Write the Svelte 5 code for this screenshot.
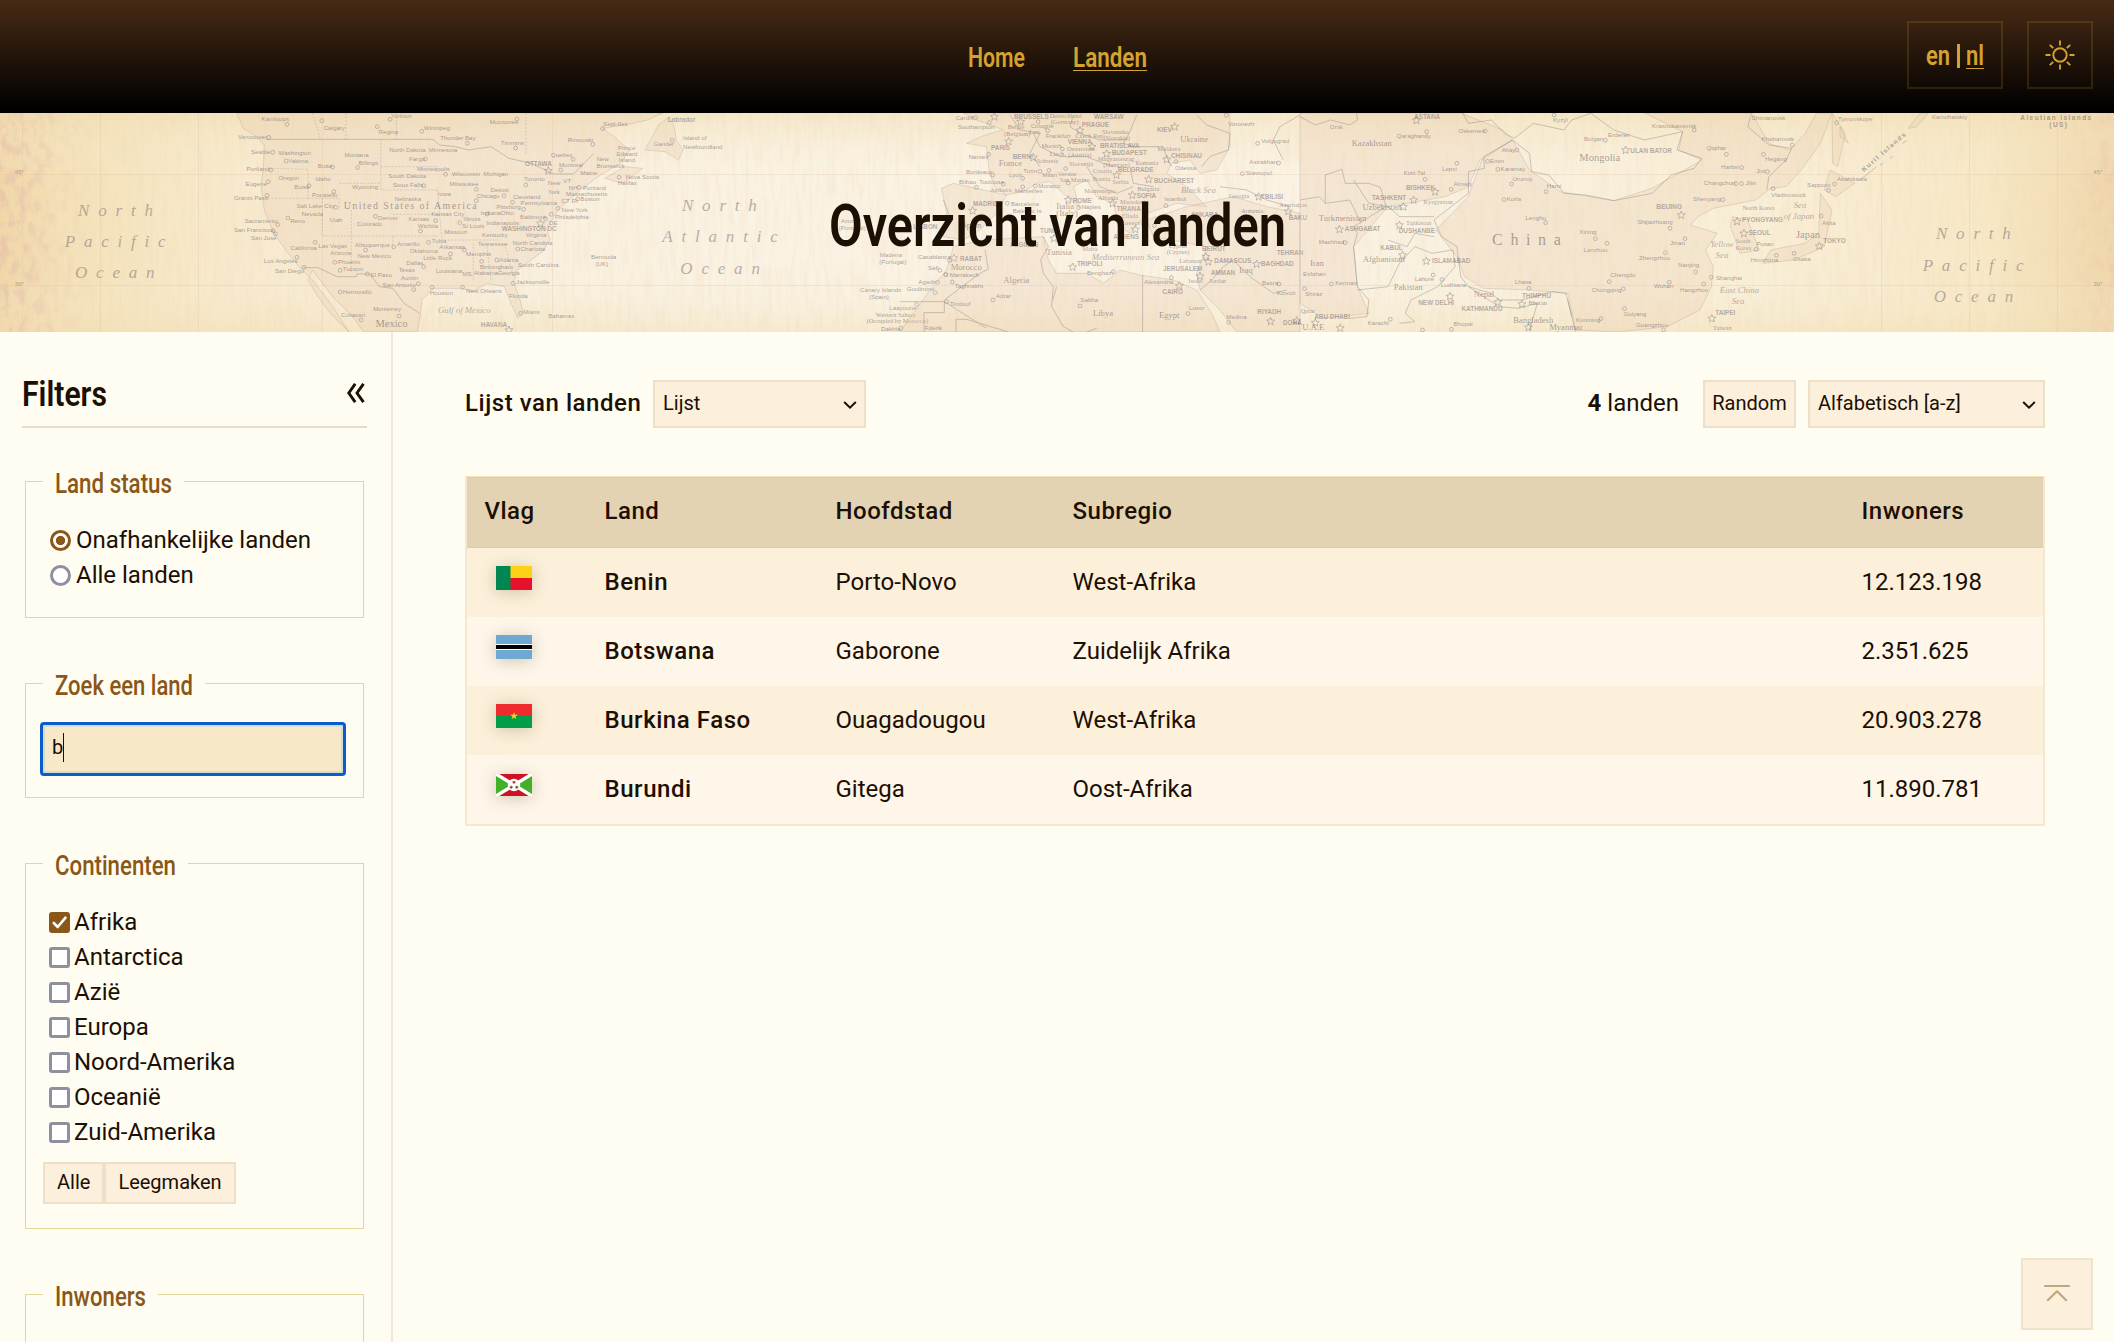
<script>
  const countries = [
    { code: 'bj', name: 'Benin', capital: 'Porto-Novo', region: 'West-Afrika', population: '12.123.198' },
    { code: 'bw', name: 'Botswana', capital: 'Gaborone', region: 'Zuidelijk Afrika', population: '2.351.625' },
    { code: 'bf', name: 'Burkina Faso', capital: 'Ouagadougou', region: 'West-Afrika', population: '20.903.278' },
    { code: 'bi', name: 'Burundi', capital: 'Gitega', region: 'Oost-Afrika', population: '11.890.781' }
  ];
  const continents = ['Afrika', 'Antarctica', 'Azië', 'Europa', 'Noord-Amerika', 'Oceanië', 'Zuid-Amerika'];

  // The banner map is made of sheets; every sheet has its own origin and grid scale.
  // Labels: [text, x, baseline, style]. Styles: n = town, b = capital, s = country, i = sea.
  const sheets = [
    {
      ox: 0, oy: 100, sx: 0.4464, sy: 0.3333,
      land: [
        'M530 39 L545 85 L575 110 L592 135 L590 200 L585 260 L592 330 L612 395 L640 450 L670 500 L700 540 L735 600 L760 650 L782 696 L740 640 L712 590 L690 540 L700 510 L745 590 L790 650 L815 696 L935 696 L942 640 L945 600 L970 565 L1035 565 L1060 575 L1090 550 L1130 560 L1145 610 L1160 655 L1172 640 L1165 600 L1150 545 L1160 510 L1215 455 L1232 420 L1225 385 L1250 330 L1275 300 L1300 270 L1345 225 L1390 190 L1410 150 L1375 110 L1350 85 L1400 75 L1450 60 L1485 39 Z',
        'M1500 50 L1475 75 L1445 150 L1490 155 L1520 180 L1530 150 L1515 120 L1510 80 Z',
        'M1355 235 L1400 200 L1440 205 L1395 250 Z'
      ],
      lines: [
        'M595 118 L970 118 L985 135 L1020 140 L1050 150 L1100 140 L1140 175 L1190 190 L1240 222 L1285 222 L1330 160',
        'M680 503 L712 503 L755 530 L798 530 L800 522 L828 522 L850 560 L880 565 L905 610 L940 640'
      ],
      states: [
        'M605 205 L690 208 L690 295 L600 295 M690 295 L760 295 M722 295 L722 408 L980 408 M787 330 L787 520 M853 118 L853 270 L980 270 M853 200 L980 200 M760 250 L853 250 M760 295 L760 330 M880 343 L980 343 M880 408 L880 440 M775 39 L775 118 M888 39 L888 118 M1178 39 L1178 165 M980 270 L990 420 L1120 420 M1060 430 L1060 540 M1090 430 L1100 540 M1130 430 L1150 530 M700 39 L718 118'
      ],
      dots: [[643,73],[721,62],[845,80],[874,58],[945,94],[1047,130],[1155,144],[1158,57],[1350,86],[1328,133],[1284,178],[602,112],[611,157],[641,183],[607,210],[601,245],[598,286],[692,257],[748,275],[745,201],[801,203],[953,177],[998,223],[949,257],[1067,268],[1067,302],[1129,287],[1178,255],[1148,307],[1173,328],[1256,210],[1297,262],[1294,297],[1250,325],[1235,343],[1222,356],[752,322],[645,354],[622,374],[612,392],[617,402],[841,349],[976,362],[1030,368],[942,393],[706,427],[882,441],[819,450],[665,472],[681,502],[750,487],[762,511],[823,522],[960,427],[1040,450],[1009,462],[949,500],[1079,484],[1113,480],[1160,447],[937,551],[927,569],[968,562],[1036,562],[1150,550],[762,576],[894,648],[809,660],[1166,640],[1387,232],[1506,121],[1091,342]],
      stars: [[1228,212],[1211,370],[1140,690]],
      labels: [
        ['Kamloops',586,62,'n'],['Calgary',725,91,'n'],['Regina',848,103,'n'],['Yorkton',876,55,'n'],['Winnipeg',950,89,'n'],['Moosonee',1097,73,'n'],['Thunder Bay',986,119,'n'],['Timmins',1122,134,'n'],['Sept-Iles',1351,77,'n'],['Labrador',1496,67,'b'],['Vancouver',533,118,'n'],['Seattle',562,162,'n'],['Washington',624,164,'n'],['Yakima',645,188,'n'],['Portland',552,213,'n'],['Eugene',550,259,'n'],['Grants Pass',524,299,'n'],['Oregon',624,241,'n'],['Idaho',706,244,'n'],['Boise',659,266,'n'],['Pocatello',699,290,'n'],['Butte',712,203,'n'],['Billings',803,194,'n'],['Montana',772,171,'n'],['North Dakota',872,156,'n'],['Minnesota',960,157,'n'],['Fargo',916,182,'n'],['Minneapolis',934,214,'n'],['South Dakota',870,234,'n'],['Wisconsin',1012,227,'n'],['Michigan',1083,228,'n'],['Sioux Falls',880,261,'n'],['Milwaukee',1007,257,'n'],['Toronto',1174,244,'n'],['Detroit',1099,275,'n'],['Wyoming',789,268,'n'],['Nebraska',884,302,'n'],['Iowa',981,287,'n'],['Chicago',1068,293,'n'],['Cleveland',1149,298,'n'],['Pennsylvania',1166,316,'n'],['Pittsburg',1112,327,'n'],['Salt Lake City',664,325,'n'],['Nevada',676,349,'n'],['Utah',738,367,'n'],['Reno',650,368,'n'],['Denver',847,360,'n'],['Colorado',800,377,'n'],['Kansas',915,364,'n'],['Kansas City',966,348,'n'],['Illinois',1038,362,'n'],['Indiana',1077,345,'n'],['Ohio',1122,345,'n'],['Indianapolis',1089,376,'n'],['St Louis',1035,385,'n'],['Wichita',936,383,'n'],['Missouri',995,402,'n'],['Kentucky',1080,410,'n'],['Baltimore',1165,356,'n'],['Virginia',1178,412,'n'],['WASHINGTON DC',1124,393,'b'],['OTTAWA',1176,197,'b'],['Quebec',1234,172,'n'],['Rimouski',1272,126,'n'],['Montreal',1252,201,'n'],['Maine',1300,224,'n'],['New',1336,183,'n'],['Brunswick',1336,205,'n'],['Prince',1384,151,'n'],['Edward',1381,168,'n'],['Island',1386,185,'n'],['Nova Scotia',1402,238,'n'],['Halifax',1384,256,'n'],['Gander',1464,139,'n'],['NH',1274,269,'n'],['VT',1262,249,'n'],['Portland',1306,269,'n'],['Massachusetts',1268,287,'n'],['Boston',1300,304,'n'],['CT RI',1258,308,'n'],['New',1227,256,'n'],['York',1227,281,'n'],['New York',1258,337,'n'],['Philadelphia',1243,356,'n'],['DE',1230,374,'n'],['Sacramento',548,368,'n'],['San Francisco',524,397,'n'],['San Jose',562,420,'n'],['California',651,449,'n'],['Las Vegas',713,445,'n'],['Arizona',740,466,'n'],['Albuquerque',795,440,'n'],['New Mexico',801,473,'n'],['Amarillo',890,437,'n'],['Oklahoma',918,459,'n'],['Tulsa',967,429,'n'],['Arkansas',984,448,'n'],['Little Rock',948,479,'n'],['Memphis',1044,467,'n'],['Tennessee',1070,439,'n'],['North Carolina',1148,435,'n'],['Charlotte',1166,454,'n'],['South Carolina',1160,501,'n'],['Atlanta',1118,485,'n'],['Birmingham',1075,506,'n'],['Alabama',1061,526,'n'],['Georgia',1115,526,'n'],['MS',1036,527,'n'],['Louisiana',976,518,'n'],['Dallas',910,495,'n'],['Texas',893,517,'n'],['Phoenix',757,492,'n'],['Tucson',768,514,'n'],['El Paso',830,531,'n'],['Los Angeles',591,489,'n'],['San Diego',616,520,'n'],['Austin',898,541,'n'],['San Antonio',857,561,'n'],['Houston',963,584,'n'],['New Orleans',1044,579,'n'],['Jacksonville',1156,552,'n'],['Florida',1140,594,'n'],['Miami',1172,642,'n'],['Bahamas',1228,655,'n'],['Hermosillo',768,581,'n'],['Monterrey',836,634,'n'],['Culiacan',764,650,'n'],['HAVANA',1077,682,'b'],['Bermuda',1324,477,'n'],['(UK)',1334,499,'n'],['Mexico',841,681,'m'],['Gulf of Mexico',981,640,'i'],['United States of America',770,328,'u'],['45°',33,222,'n'],['30°',33,558,'n'],
        ['North',175,347,'o'],['Pacific',145,441,'o'],['Ocean',168,534,'o']
      ]
    },
    {
      ox: 600, oy: 100, sx: 0.3333, sy: 0.3333, land: [], lines: [], states: [], dots: [[1049,482],[1038,524],[1013,547],[1020,511],[1006,578],[950,613],[903,684]], stars: [[1062,474]],
      labels: [
        ['Island of',249,120,'n'],['Newfoundland',249,146,'n'],['Azores',722,370,'n'],['(Portugal)',716,389,'n'],['Madeira',839,471,'n'],['(Portugal)',838,491,'n'],['Canary Islands',780,577,'n'],['(Spain)',807,596,'n'],['Casablanca',954,476,'n'],['Safi',984,509,'n'],['Agadir',955,552,'n'],['Goulimine',920,572,'n'],['Laayoune',868,629,'n'],['Western Sahara',827,650,'z'],['(Occupied by Morocco)',800,670,'z'],['Dakhla',843,693,'n'],
        ['North',246,333,'o'],['Atlantic',187,427,'o'],['Ocean',241,521,'o']
      ]
    },
    {
      ox: 900, oy: 0, sx: 0.3333, sy: 0.3333,
      land: [
        'M200 430 L260 440 L268 520 L285 560 L320 585 L380 570 L410 550 L450 545 L500 590 L540 625 L520 560 L560 540 L590 590 L640 610 L660 680 L690 700 L740 640 L830 610 L920 620 L860 560 L800 520 L815 490 L870 480 L900 520 L950 510 L990 440 L990 339 L190 339 L230 360 L310 390 L255 405 Z',
        'M125 565 L160 550 L320 585 L290 640 L240 690 L190 720 L130 710 L140 640 Z',
        'M160 740 L250 720 L430 710 L445 780 L470 820 L560 820 L610 850 L660 810 L720 825 L820 840 L890 870 L910 900 L940 950 L960 996 L0 996 L40 940 L90 870 L140 810 Z',
        'M740 660 L860 620 L1000 590 L1100 620 L1200 640 L1200 996 L1010 996 L960 930 L900 870 L890 820 L920 740 L760 710 Z'
      ],
      lines: [
        'M430 710 L445 740 L422 780 L430 820 L460 860 L455 920 L490 980 L520 996',
        'M728 825 L728 996 M133 900 L240 820 L265 808 L255 750 M0 905 L133 905 L133 938 L72 938 L72 996 M168 996 L168 958 L200 958 L325 996 M133 905 L260 985',
        'M470 860 L458 900 M900 870 L935 840 L970 800 L1000 780 L1050 830 L1120 880 L1160 870 M560 996 L590 985',
        'M710 345 L690 395 L670 430 L700 440 L790 440 L800 470 L815 500 M520 345 L510 380 L540 400 L600 420 L680 420 M400 400 L420 440 L480 470 L560 470 L610 490 L640 500 M890 345 L920 375 L990 400 L985 450 L930 470 L905 500 M1200 345 L1140 380 L1120 420 L1150 480 M130 600 L150 650 L130 700 M330 345 L360 390 L420 400 L390 460 L420 500 M560 500 L600 560 L650 580 L700 560 M690 500 L700 550 L760 560 M960 560 L1040 570 L1100 600 L1170 620'
      ],
      states: [],
      dots: [[227,353],[268,368],[266,463],[278,525],[229,562],[310,552],[368,535],[368,561],[322,610],[414,365],[443,392],[487,447],[420,514],[447,511],[497,506],[406,558],[505,549],[536,623],[979,346],[1073,430],[1136,489],[1027,521],[828,485],[798,617],[763,677],[640,815],[814,833],[864,941],[986,967],[540,918],[279,900],[157,846],[137,824],[140,905],[1137,852]],
      stars: [[283,350],[326,424],[400,472],[362,365],[540,391],[824,380],[576,440],[620,461],[800,478],[650,525],[746,538],[697,585],[505,599],[638,610],[706,688],[218,632],[518,801],[918,770],[900,828],[838,857],[1070,792],[1112,964],[1076,590],[1165,634],[462,715],[925,785],[1190,962]],
      labels: [
        ['Cardiff',167,360,'n'],['Southampton',173,386,'n'],['PARIS',273,449,'b'],['BRUSSELS',342,358,'b'],['Belgie',323,387,'z'],['(Belgium)',312,407,'z'],['Lux.',388,403,'z'],['Nantes',206,476,'n'],['BERN',338,476,'b'],['France',296,499,'s'],['Bordeaux',198,521,'n'],['Lyon',327,530,'n'],['Turin',370,520,'n'],['Bilbao',177,552,'n'],['Toulouse',238,551,'n'],['Andorra',270,577,'z'],['Marseilles',344,579,'n'],['Monaco',415,563,'n'],['MADRID',219,618,'b'],['Barcelona',333,618,'n'],['Balearic Is',338,640,'n'],['LISBON',40,687,'b'],['Spain',185,685,'s'],['Deutschland',449,355,'z'],['(Germany)',452,373,'z'],['Cologne',392,385,'n'],['WARSAW',582,357,'b'],['PRAGUE',545,382,'b'],['Frankfurt',437,413,'n'],['Czech Rep.',526,415,'z'],['Slovensko',606,403,'z'],['(Slovakia)',610,421,'z'],['VIENNA',503,433,'b'],['Munich',425,445,'n'],['Osterreich',501,452,'z'],['(Austria)',505,471,'z'],['BRATISLAVA',600,444,'b'],['BUDAPEST',635,464,'b'],['Magyarorszag',593,483,'z'],['(Hungary)',610,502,'z'],['Liech.',449,468,'z'],['Schweiz',410,488,'z'],['Slovenija',507,497,'z'],['Croatia',579,520,'z'],['Milan',427,531,'n'],['Venice',474,527,'n'],['San Marino',479,545,'z'],['Bosnia',578,544,'z'],['Serbia',637,553,'z'],['Montenegro',553,579,'z'],['Albania',594,600,'z'],['ROME',518,608,'b'],['Italia',469,626,'s'],['(Italy)',469,648,'s'],['Naples',545,628,'n'],['TIRANA',650,632,'b'],['Macedonia',660,613,'z'],['SOFIA',710,593,'b'],['Bulgaria',712,572,'z'],['BUCHAREST',762,549,'b'],['BELGRADE',653,517,'b'],['Romania',706,495,'z'],['Moldova',772,454,'z'],['CHISINAU',813,473,'b'],['Odessa',825,509,'n'],['KIEV',771,396,'b'],['Ukraine',841,425,'s'],['Voronezh',985,378,'n'],['Volgograd',1084,428,'n'],['Astrakhan',1048,493,'n'],['Stavropol',1037,526,'n'],['Black Sea',843,578,'i'],['Istanbul',793,604,'n'],['Georgia',986,595,'z'],['TBILISI',1083,596,'b'],['Armenia',1023,640,'z'],['Azerbaijan',1138,620,'z'],['BAKU',1166,660,'b'],['ANKARA',872,650,'b'],['Ellada',665,655,'z'],['(Greece)',660,674,'z'],['ATHENS',640,716,'b'],['TUNIS',420,699,'b'],['ALGIERS',330,742,'b'],['Malta',547,752,'z'],['Cyprus',806,743,'z'],['(Cyprus)',800,763,'z'],['BEIRUT',906,754,'b'],['Lebanon',838,788,'z'],['DAMASCUS',943,790,'b'],['BAGHDAD',1083,798,'b'],['TEHRAN',1130,766,'b'],['Iraq',1017,818,'s'],['JERUSALEM',789,814,'b'],['AMMAN',932,825,'b'],['Israel',865,850,'z'],['Jordan',927,850,'z'],['Mediterranean Sea',575,781,'i'],['Tunisia',439,764,'s'],['TRIPOLI',531,799,'b'],['Benghazi',561,826,'n'],['Alexandria',733,852,'n'],['CAIRO',787,883,'b'],['Basra',1086,854,'n'],['Kuwait',1130,884,'z'],['RABAT',180,783,'b'],['Morocco',152,809,'s'],['Marrakech',149,830,'n'],['Taghnakht',164,865,'n'],['Algeria',310,850,'s'],['Adrar',288,893,'n'],['Tindouf',150,917,'n'],['Sabha',541,907,'n'],['Libya',579,948,'s'],['Egypt',777,953,'s'],['Luxor',867,931,'n'],['Medina',979,957,'n'],['RIYADH',1072,943,'b'],['Fderik',75,990,'n'],['DOHA',1149,976,'b']
      ]
    },
    {
      ox: 1300, oy: 100, sx: 0.3827, sy: 0.3333,
      land: [
        'M355 390 L440 290 L475 180 L555 120 L600 210 L680 275 L820 302 L920 265 L1050 180 L990 150 L1000 95 L900 39 L1180 39 L1225 130 L1280 150 L1320 100 L1350 39 L1390 39 L1360 130 L1310 210 L1270 260 L1230 265 L1190 300 L1080 325 L1040 350 L1020 375 L1090 400 L1060 450 L1080 500 L1075 560 L1045 630 L960 680 L830 696 L720 690 L700 580 L600 570 L480 565 L430 530 L410 470 Z',
        'M0 39 L420 39 L530 90 L555 120 L470 180 L440 260 L380 290 L230 320 L140 440 L150 560 L180 640 L60 655 L0 610 Z',
        'M1130 350 L1170 360 L1200 450 L1150 460 L1125 380 Z',
        'M1360 280 L1390 330 L1370 440 L1290 480 L1210 490 L1230 450 L1320 430 L1355 400 Z',
        'M1385 210 L1450 250 L1400 290 L1370 270 Z',
        'M1390 39 L1425 100 L1405 200 L1392 190 Z'
      ],
      lines: [
        'M0 50 L40 75 L80 60 L130 75 L150 60 L148 39 M425 39 L440 70 L500 60 L535 100 L560 115 L610 70 L690 90 L710 60 L760 40 L820 90 L900 120 L960 105 L1000 95 L985 150 L1050 175 L1030 205 L970 225 L920 280 L820 302 L745 285 L690 280 L650 225 L605 215 L600 160 L555 120 L480 170 L482 205 L440 215 L440 280 L350 360 L370 410 L410 440 L420 530 L440 560 L500 580 L520 600 L580 600 L660 575 L695 580 L710 650',
        'M66 310 L66 225 L110 208 L118 250 L180 250 L210 262 L225 320 L140 380 L150 400 L140 440 L150 560 L180 600 L175 650 L130 655 M140 240 L180 310 L230 320 L260 350 L350 350 M0 300 L50 290 L66 310 L130 300 L160 370 M230 420 L280 440 L300 400 L350 410 M150 570 L230 560 L260 490 L300 440 L345 460 L400 450 L405 500 L360 560 L290 600 L275 640 L300 665 L260 670 M440 560 L520 620 L570 625 L620 610 L600 690 M700 600 L720 696 M1180 39 L1170 80 L1225 135 L1285 145 L1270 180 L1225 230 L1220 270'
      ],
      states: [],
      dots: [[331,95],[484,93],[567,150],[490,184],[517,208],[410,190],[327,238],[395,268],[553,252],[643,275],[533,299],[642,368],[772,416],[802,430],[798,121],[664,45],[1030,90],[1114,163],[1154,203],[1139,251],[1154,251],[1221,215],[1211,163],[1286,135],[1236,266],[1105,299],[967,385],[1006,416],[955,458],[1034,516],[1075,532],[1055,552],[965,547],[808,545],[845,567],[848,626],[786,656],[950,690],[598,565],[371,539],[348,525],[118,428],[82,552],[236,658],[396,688],[320,690],[12,566],[1362,348],[1397,252],[1381,271],[1291,460],[1245,466],[1192,448],[1402,68]],
      stars: [[304,61],[851,150],[353,275],[297,300],[270,320],[103,388],[260,375],[268,465],[330,483],[392,589],[517,606],[580,612],[996,345],[1142,364],[1160,400],[1357,438],[1076,655],[40,668],[105,684],[597,682]],
      labels: [
        ['Orsk',78,86,'n'],['ASTANA',298,56,'b'],['Qaraghandy',253,115,'n'],['Kazakhstan',135,137,'s'],['Oskemen',414,98,'n'],['Altay',527,155,'n'],['Emin',496,188,'n'],['Karamay',524,213,'n'],['Lepsi',371,213,'n'],['Kizil-Tal',271,224,'n'],['Urumqi',555,243,'n'],['Almaty',401,258,'n'],['Hami',645,264,'n'],['BISHKEK',277,269,'b'],['TASHKENT',188,300,'b'],['Korla',540,303,'n'],['Kyrgyzstan',323,312,'z'],['Uzbekistan',163,331,'s'],['Turkmenistan',49,363,'s'],['Tajikistan',277,374,'z'],['ASHGABAT',117,394,'b'],['DUSHANBE',258,400,'b'],['Lenghu',589,360,'n'],['Mashhad',49,432,'n'],['KABUL',210,449,'b'],['Afghanistan',164,486,'s'],['ISLAMABAD',345,489,'b'],['Iran',26,497,'s'],['Esfahan',8,527,'n'],['Kerman',92,556,'n'],['Shiraz',13,588,'n'],['Lahore',300,543,'n'],['Ludhiana',368,561,'n'],['Pakistan',245,571,'s'],['Nepal',454,590,'s'],['Lhasa',561,553,'n'],['NEW DELHI',309,615,'b'],['THIMPHU',580,595,'b'],['Bhutan',597,616,'z'],['KATHMANDU',422,634,'b'],['ABU DHABI',37,658,'b'],['Qatar',2,638,'z'],['U.A.E',6,690,'s'],['Karachi',177,675,'n'],['Bhopal',401,679,'n'],['Bangladesh',557,668,'s'],['Myanmar',651,690,'s'],['Kyzyl',661,66,'n'],['Bulgan',742,123,'n'],['Erdenet',805,110,'n'],['Krasnokamensk',920,84,'n'],['ULAN BATOR',863,160,'b'],['Mongolia',730,184,'m'],['Qiqihar',1062,151,'n'],['Harbin',1100,206,'n'],['Jixi',1192,219,'n'],['Hegang',1215,182,'n'],['Khabarovsk',1206,124,'n'],['Shimanovsk',1180,60,'n'],['Changchun',1055,254,'n'],['Jilin',1164,256,'n'],['Vladivostock',1231,292,'n'],['Shenyang',1027,302,'n'],['BEIJING',931,328,'b'],['North Korea',1156,329,'z'],['Shijiazhuang',881,371,'n'],['PYONGYANG',1155,366,'b'],['SEOUL',1172,406,'b'],['South',1138,428,'z'],['Korea',1138,451,'z'],['Pusan',1192,438,'n'],['Sea',1290,325,'i'],['of Japan',1264,356,'i'],['Japan',1296,415,'m'],['TOKYO',1367,430,'b'],['Akita',1364,374,'n'],['Sapporo',1325,262,'n'],['Asahikawa',1403,244,'n'],['Osaka',1288,483,'n'],['Hiroshima',1177,485,'n'],['Yellow',1072,442,'i'],['Sea',1086,474,'i'],['Xining',730,403,'n'],['Lanzhou',741,457,'n'],['Jinan',967,436,'n'],['Zhengzhou',886,480,'n'],['Nanjing',988,500,'n'],['Shanghai',1087,541,'n'],['Chengdu',811,532,'n'],['Chongqing',762,577,'n'],['Wuhan',925,565,'n'],['Hangzhou',993,577,'n'],['East China',1097,580,'i'],['Sea',1128,611,'i'],['Guiyang',845,649,'n'],['Kunming',721,667,'n'],['Guangzhou',878,680,'n'],['TAIPEI',1085,646,'b'],['Taiwan',1079,690,'z'],['China',502,434,'c']
      ]
    },
    {
      ox: 1840, oy: 0, sx: 0.3333, sy: 0.3333,
      land: ['M205 385 L240 339 L265 339 L230 380 Z', 'M0 380 L25 430 L0 410 Z'],
      lines: ['M60 540 L110 500 M120 495 L130 490 M150 475 L160 468 M188 430 L200 422'], states: [],
      dots: [], stars: [],
      labels: [['Tymovskoye',-6,363,'n'],['Kamchatskiy',276,358,'n'],['Aleutian Islands',541,361,'w'],['(US)',628,381,'w'],['45°',760,522,'n'],['30°',760,857,'n'],['North',288,718,'o'],['Pacific',248,812,'o'],['Ocean',281,906,'o']]
    }
  ];
</script>

<!-- Condensed heading face: the text is fitted to the given width. -->
{#snippet condensed(text, width, size, weight, height, baseline)}
  <svg class="cond" {width} {height}>
    <text x="0" y={baseline} font-size={size} font-weight={weight} textLength={width} lengthAdjust="spacingAndGlyphs">{text}</text>
  </svg>
{/snippet}

{#snippet chevron()}
  <svg class="chevron" width="14" height="8" viewBox="0 0 14 8"><path d="M1.2 1 L7 6.6 L12.8 1" /></svg>
{/snippet}

{#snippet flag(code)}
  {#if code === 'bj'}
    <svg class="flag" width="36" height="24" viewBox="0 0 36 24"><path fill="#fcd116" d="M0 0h36v12H0z" /><path fill="#e8112d" d="M0 12h36v12H0z" /><path fill="#008751" d="M0 0h14.5v24H0z" /></svg>
  {:else if code === 'bw'}
    <svg class="flag" width="36" height="24" viewBox="0 0 36 24"><path fill="#6da9d2" d="M0 0h36v24H0z" /><path fill="#fff" d="M0 9h36v6H0z" /><path fill="#000" d="M0 10h36v4H0z" /></svg>
  {:else if code === 'bf'}
    <svg class="flag" width="36" height="24" viewBox="0 0 36 24"><path fill="#ef2b2d" d="M0 0h36v12H0z" /><path fill="#009e49" d="M0 12h36v12H0z" /><path fill="#fcd116" d="M18 8l.95 2.7h2.85l-2.3 1.75.85 2.75L18 13.6l-2.35 1.6.85-2.75-2.3-1.75h2.85z" /></svg>
  {:else}
    <svg class="flag" width="36" height="22" viewBox="0 0 36 22"><path fill="#ce1126" d="M0 0h36v22H0z" /><path fill="#43b02a" d="M0 0l18 11L0 22zM36 0L18 11l18 11z" /><path stroke="#fff" stroke-width="3.4" d="M0 0l36 22M36 0L0 22" /><circle cx="18" cy="11" r="6.2" fill="#fff" /><path fill="#ce1126" stroke="#43b02a" stroke-width=".3" d="M18 6.6l.5.9h1l-.5.8.5.8h-1l-.5.9-.5-.9h-1l.5-.8-.5-.8h1zM15.200 11.600l.5.9h1l-.5.8.5.8h-1l-.5.9-.5-.9h-1l.5-.8-.5-.8h1zM20.800 11.600l.5.9h1l-.5.8.5.8h-1l-.5.9-.5-.9h-1l.5-.8-.5-.8h1z" /></svg>
  {/if}
{/snippet}

<div class="page">
  <header>
    <div class="side"></div>
    <nav>
      <a href="#home">{@render condensed('Home', 57, 27.4, 600, 34, 27)}</a>
      <a href="#landen" class="current">{@render condensed('Landen', 74, 27.4, 600, 34, 27)}</a>
    </nav>
    <div class="side tools">
      <div class="box lang">
        {@render condensed('en', 24, 27.4, 600, 34, 27)}
        <i class="bar"></i>
        <span class="current">{@render condensed('nl', 18, 27.4, 600, 34, 27)}</span>
      </div>
      <div class="box theme">
        <svg width="30" height="30" viewBox="0 0 30 30">
          <circle cx="15" cy="15" r="6.7" />
          <path d="M15 .5v5M15 24.5v5M.5 15h5M24.5 15h5M4.8 4.8l3.4 3.4M21.8 21.8l3.4 3.4M4.8 25.2l3.4-3.4M21.8 8.2l3.4-3.4" />
        </svg>
      </div>
    </div>
  </header>

  <div class="banner">
    <svg class="map" width="2114" height="219" viewBox="0 113 2114 219">
      <defs>
        <filter id="grain" x="0" y="0" width="100%" height="100%">
          <feTurbulence type="fractalNoise" baseFrequency=".22 .03" numOctaves="3" seed="8" />
          <feColorMatrix values="0 0 0 0 .85  0 0 0 0 .68  0 0 0 0 .45  0 0 0 1.2 -.5" />
        </filter>
        <filter id="stain" x="0" y="0" width="100%" height="100%">
          <feTurbulence type="fractalNoise" baseFrequency=".11 .07" numOctaves="4" seed="3" />
          <feColorMatrix values="0 0 0 0 .76  0 0 0 0 .48  0 0 0 0 .42  0 0 0 4 -1.8" />
        </filter>
        <linearGradient id="paper">
          <stop offset="0" stop-color="#f0d7a8" /><stop offset=".03" stop-color="#f4e1b8" /><stop offset=".1" stop-color="#f7e9cb" />
          <stop offset=".2" stop-color="#f8eedb" /><stop offset=".35" stop-color="#faf2e3" /><stop offset=".6" stop-color="#faf2e4" /><stop offset=".82" stop-color="#f9efd9" />
          <stop offset=".94" stop-color="#f7e8c6" /><stop offset="1" stop-color="#f0d7ab" />
        </linearGradient>
        <linearGradient id="fade" x2="0" y2="1">
          <stop offset="0" stop-color="#f0dcae" stop-opacity=".5" /><stop offset=".3" stop-color="#f8efdc" stop-opacity="0" />
          <stop offset=".75" stop-color="#f8efdc" stop-opacity="0" /><stop offset="1" stop-color="#f0dcae" stop-opacity=".4" />
        </linearGradient>
        <linearGradient id="edge">
          <stop offset="0" stop-color="#fff" /><stop offset=".045" stop-color="#000" /><stop offset=".975" stop-color="#000" /><stop offset="1" stop-color="#777" />
        </linearGradient>
        <mask id="edges"><rect y="113" width="2114" height="219" fill="url(#edge)" /></mask>
      </defs>
      <rect y="113" width="2114" height="219" fill="url(#paper)" />
      <rect y="113" width="2114" height="219" fill="url(#fade)" />
      <path class="grid" d="M0 174.500H2114M0 285.500H2114M22.500 113V332M100.500 113V332M198.500 113V332M322.500 113V332M552.500 113V332M1881.500 113V332M1969.500 113V332M2057.500 113V332" />
      {#each sheets as s}
        <g transform="translate({s.ox} {s.oy}) scale({s.sx} {s.sy})">
          {#each s.land as d}<path class="land" {d} />{/each}
          {#each s.lines as d}<path class="border" {d} />{/each}
          {#each s.states as d}<path class="border state" {d} />{/each}
        </g>
        {#each s.dots as [x, y]}<circle class="town" cx={s.ox + x * s.sx} cy={s.oy + y * s.sy} r="1.9" />{/each}
        {#each s.stars as [x, y]}<path class="town" transform="translate({s.ox + x * s.sx} {s.oy + y * s.sy})" d="M0-4l1.100 2.700 2.900.2-2.200 1.800.7 2.900L0 2l-2.500 1.600.7-2.900-2.200-1.800 2.900-.2z" />{/each}
        {#each s.labels as [t, x, y, k]}<text class="label {k}" x={s.ox + x * s.sx} y={s.oy + y * s.sy}>{t}</text>{/each}
      {/each}
      <text class="label w" transform="translate(1864 172) rotate(-41)">Kuril Islands</text>
      <rect y="113" width="2114" height="219" filter="url(#grain)" opacity=".5" />
      <rect y="113" width="2114" height="219" filter="url(#stain)" mask="url(#edges)" opacity=".5" />
    </svg>
    <h1>{@render condensed('Overzicht van landen', 457, 58.5, 650, 70, 59)}</h1>
  </div>

  <div class="body">
    <aside>
      <div class="filters">
        <h2>{@render condensed('Filters', 85, 35.5, 650, 44, 34)}</h2>
        <svg class="collapse" width="20" height="20" viewBox="0 0 20 20"><path d="M9.200.8L2.800 10l6.400 9.200M17.500.8L11 10l6.500 9.200" /></svg>
      </div>

      <fieldset class="status">
        <legend>{@render condensed('Land status', 117, 27.4, 550, 33, 28)}</legend>
        <div class="opt"><span class="radio on"></span>Onafhankelijke landen</div>
        <div class="opt"><span class="radio"></span>Alle landen</div>
      </fieldset>

      <fieldset class="search">
        <legend>{@render condensed('Zoek een land', 138, 27.4, 550, 33, 28)}</legend>
        <div class="input">b<i class="caret"></i></div>
      </fieldset>

      <fieldset class="continents">
        <legend>{@render condensed('Continenten', 121, 27.4, 550, 33, 28)}</legend>
        {#each continents as c, i}
          <div class="opt tick">
            <span class="check" class:on={i === 0}>
              {#if i === 0}<svg width="21" height="21" viewBox="0 0 21 21"><path d="M4.800 11l3.900 4L16.500 5.700" /></svg>{/if}
            </span>{c}
          </div>
        {/each}
        <div class="actions"><span class="btn">Alle</span><span class="btn">Leegmaken</span></div>
      </fieldset>

      <fieldset class="inhabitants">
        <legend>{@render condensed('Inwoners', 91, 27.4, 550, 33, 28)}</legend>
      </fieldset>
    </aside>

    <main>
      <div class="toolbar">
        <strong>Lijst van landen</strong>
        <div class="control view">Lijst {@render chevron()}</div>
        <div class="count"><b>4</b> landen</div>
        <div class="control random">Random</div>
        <div class="control sort">Alfabetisch [a-z] {@render chevron()}</div>
      </div>

      <table>
        <colgroup><col class="c1" /><col class="c2" /><col class="c3" /><col class="c4" /><col /></colgroup>
        <thead>
          <tr><th>Vlag</th><th>Land</th><th>Hoofdstad</th><th>Subregio</th><th>Inwoners</th></tr>
        </thead>
        <tbody>
          {#each countries as c}
            <tr><td>{@render flag(c.code)}</td><td class="name">{c.name}</td><td>{c.capital}</td><td>{c.region}</td><td>{c.population}</td></tr>
          {/each}
        </tbody>
      </table>
    </main>
  </div>

  <div class="totop">
    <svg width="28" height="20" viewBox="0 0 28 20"><path d="M2 3h24M4.800 17.200L14 8.300l9.200 8.900" /></svg>
  </div>
</div>

<style>
  :global(body) { background: #fffdf1; overflow: hidden; }
  .page { position: relative; width: 2114px; height: 1342px; overflow: hidden; background: #fffdf1; color: #1c0f04; font: 24px/35px Roboto, 'Liberation Sans', sans-serif; box-sizing: border-box; }
  .page :is(div, aside, main, fieldset, span, header) { box-sizing: border-box; }
  .cond { display: block; overflow: visible; fill: currentColor; }

  header { display: flex; align-items: center; justify-content: space-between; height: 113px; padding: 0 21px 3px; background: linear-gradient(#482b14, #000 97%); color: #d4a32f; }
  .side { width: 300px; }
  nav { display: flex; gap: 48px; }
  a { color: inherit; text-decoration: none; }
  .current { display: block; height: 31px; border-bottom: 1px solid #d4a32f; box-sizing: border-box; }
  nav a { height: 31px; box-sizing: border-box; }
  .tools { display: flex; justify-content: flex-end; gap: 24px; }
  .box { display: flex; align-items: center; justify-content: center; height: 68px; border: 2px solid rgba(212, 163, 47, .17); }
  .lang { width: 96px; align-items: flex-start; padding-top: 15px; }
  .bar { width: 3px; height: 24px; margin: 6px 6px 0 7px; background: currentColor; }
  .theme { width: 66px; }
  .theme svg { fill: none; stroke: currentColor; stroke-width: 1.9; }

  .banner { display: grid; height: 219px; overflow: hidden; }
  .map, h1 { grid-area: 1 / 1; }
  h1 { margin: 0; place-self: start center; padding-top: 74px; z-index: 1; }
  .grid { fill: none; stroke: #d8b08a; stroke-opacity: .22; }
  .land { fill: #e6c4a6; fill-opacity: .24; stroke: #9c8d84; stroke-opacity: .3; stroke-width: .9; vector-effect: non-scaling-stroke; stroke-linejoin: round; }
  .border { fill: none; stroke: #8c8684; stroke-opacity: .5; stroke-width: .9; vector-effect: non-scaling-stroke; stroke-linejoin: round; }
  .state { stroke-opacity: .35; stroke-dasharray: 2 1.500; }
  .town { fill: none; stroke: #857c80; stroke-opacity: .6; stroke-width: .8; }
  .label { fill: #6a6168; fill-opacity: .6; font-size: 6.2px; font-family: 'Liberation Sans', sans-serif; }
  .label.b { font-weight: 700; font-size: 6.4px; fill-opacity: .5; }
  .label.s, .label.z, .label.m { font-family: 'Liberation Serif', serif; font-size: 8.600px; }
  .label.z { font-size: 6.400px; }
  .label.m { font-size: 10.500px; }
  .label.i { font-family: 'Liberation Serif', serif; font-style: italic; font-size: 8.800px; fill-opacity: .5; }
  .label.u { font-family: 'Liberation Serif', serif; font-size: 10px; letter-spacing: 1.400px; }
  .label.o { font-family: 'Liberation Serif', serif; font-style: italic; font-size: 17px; letter-spacing: 8.800px; fill-opacity: .5; }
  .label.c { font-family: 'Liberation Serif', serif; font-size: 16px; letter-spacing: 7.600px; }
  .label.w { font-weight: 700; font-size: 6.500px; letter-spacing: 1.400px; }

  .body { display: flex; height: 1010px; }
  aside { width: 393px; flex: none; border-right: 2px solid #efe7dd; padding: 40px 24px 0 22px; overflow: hidden; }
  .filters { display: flex; justify-content: space-between; height: 56px; border-bottom: 2px solid #e8dcc8; margin-bottom: 37px; }
  h2 { margin: 0; }
  .collapse { margin: 11px 1px 0 0; fill: none; stroke: #1c0f04; stroke-width: 2.900; }
  fieldset { width: 339px; margin: 0 0 49px 3px; padding: 0 17px; border: 1px solid #e3d699; min-width: 0; }
  legend { padding: 0 12px; height: 33px; color: #8a5718; }
  .status { height: 153px; }
  .search { height: 131px; }
  .continents { height: 382px; }
  .inhabitants { height: 300px; }
  .opt { display: flex; align-items: center; gap: 5px; height: 35px; padding-left: 7px; white-space: nowrap; }
  .tick { padding-left: 6px; gap: 4px; }
  legend + .opt { margin-top: 25px; }
  .radio { width: 21px; height: 21px; flex: none; border: 3px solid #8f8f9d; border-radius: 50%; background: #fff; }
  .radio.on { border-color: #8a5718; background: radial-gradient(circle, #8a5718 4.300px, #fff 5px); }
  .check { width: 21px; height: 21px; flex: none; border: 3px solid #8f8f9d; border-radius: 3px; background: #fff; }
  .check.on { border: 0; background: #8a5718; }
  .check svg { display: block; fill: none; stroke: #fff; stroke-width: 2.600; stroke-linecap: round; stroke-linejoin: round; }
  .input { display: flex; align-items: center; width: 306px; height: 54px; margin: 22px 0 0 -3px; padding: 0 0 3px 9px; border: 3px solid #0b5bc9; border-radius: 4px; box-shadow: inset 0 0 0 2px #d3dcd0; background: #f7e8c8; font-size: 20px; }
  .caret { width: 1px; height: 29px; background: #1c0f04; }
  .actions { display: flex; margin-top: 12px; font-size: 20px; }
  .btn { height: 42px; border: 2px solid #ece0c8; background: #fcf0dc; padding: 0 12px; line-height: 37px; }

  main { flex: 1; padding: 48px 69px 0 72px; }
  .toolbar { display: flex; align-items: center; height: 48px; margin-bottom: 48px; white-space: nowrap; }
  strong, .name { font-weight: 500; letter-spacing: .55px; }
  b { font-weight: 700; }
  .toolbar strong { width: 188px; padding-bottom: 2px; }
  .control { display: flex; align-items: center; justify-content: space-between; height: 48px; padding: 0 7px 2px 8px; border: 2px solid #ece0c8; background: #fcf0dc; font-size: 20px; }
  .chevron { fill: none; stroke: #1c0f04; stroke-width: 2; margin-top: 3px; }
  .view { width: 213px; }
  .count { margin-left: auto; padding: 0 24px 2px 0; }
  .random { width: 93px; margin-right: 12px; justify-content: center; padding-inline: 0; }
  .sort { width: 237px; }

  table { width: 1580px; height: 349px; table-layout: fixed; border-collapse: separate; border-spacing: 0; border: 2px solid #f5e8cd; border-top: 1px solid #f3e2bb; box-sizing: border-box; text-align: left; }
  .c1 { width: 120px; }
  .c2 { width: 231px; }
  .c3 { width: 237px; }
  .c4 { width: 789px; }
  th, td { padding: 0 0 0 17.500px; box-sizing: border-box; }
  th { height: 71px; padding-bottom: 2px; background: #e4d3b3; border-top: 1px solid #e2cb9c; border-bottom: 1px solid #e6cd94; font-weight: 500; letter-spacing: .5px; }
  td { height: 69px; padding-bottom: 1px; background: #fef6e9; }
  tbody tr:nth-child(odd) td { background: #fcf0db; }
  .flag { display: block; margin: 0 0 8px 11.500px; box-shadow: 0 2px 16px rgba(80, 70, 20, .26); }

  .totop { position: absolute; right: 21px; bottom: 12px; display: flex; justify-content: center; align-items: center; width: 72px; height: 72px; border: 2px solid #efe3cb; background: #fcf0dc; padding-bottom: 3px; }
  .totop svg { fill: none; stroke: #c3a67e; stroke-width: 2.200; stroke-linecap: round; stroke-linejoin: round; }
</style>
